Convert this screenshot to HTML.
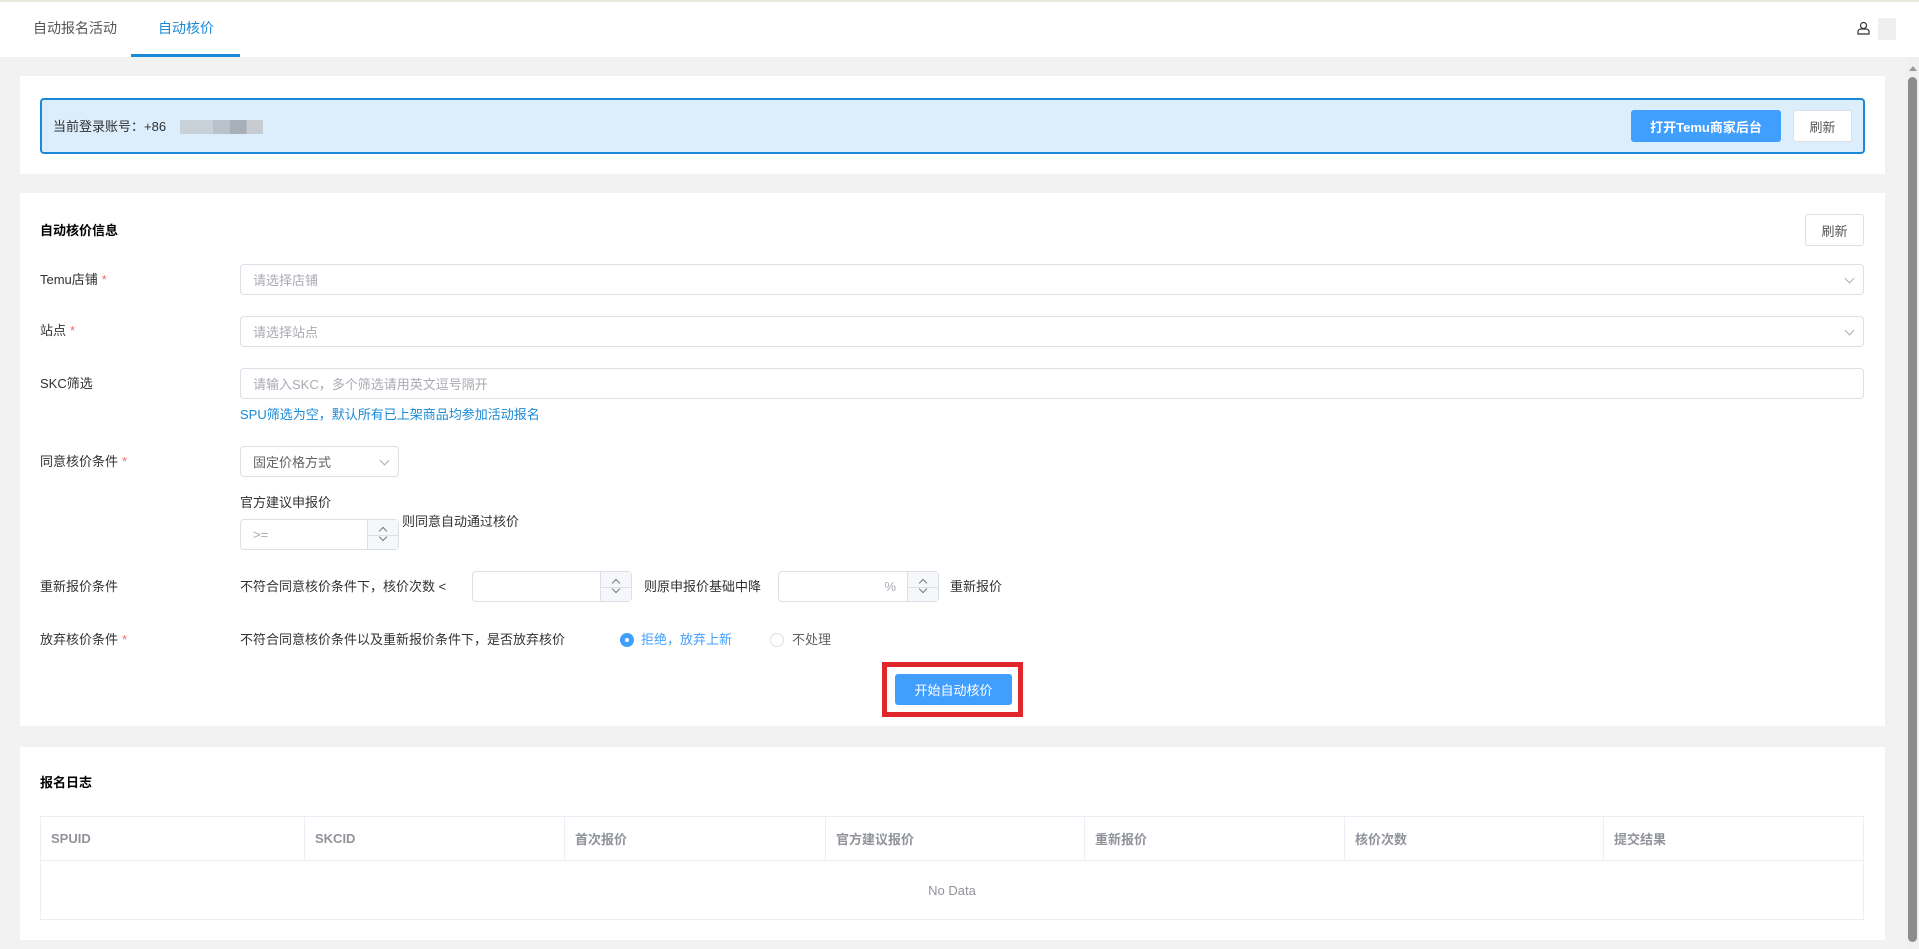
<!DOCTYPE html>
<html><head><meta charset="utf-8"><style>
*{box-sizing:border-box;margin:0;padding:0}
body{width:1919px;height:949px;overflow:hidden;background:#f2f2f2;font-family:"Liberation Sans","Noto Sans CJK SC",sans-serif;font-size:14px;color:#303133;position:relative}
.a{position:absolute}
.hdr{left:0;top:0;width:1919px;height:57px;background:#fff;border-top:2px solid #ebe8dc}
.card{background:#fff;left:20px;width:1865px}
.lbl{left:40px;font-size:13px;color:#303133;line-height:20px}
.lbl i{color:#f56c6c;font-style:normal;margin-left:4px}
.inp{border:1px solid #dcdfe6;border-radius:4px;background:#fff;color:#a8abb2;font-size:13px;padding-left:12px;display:flex;align-items:center}
.arrow{position:absolute;right:10px;top:50%;width:7px;height:7px;border-right:1px solid #a8abb2;border-bottom:1px solid #a8abb2;transform:translateY(-70%) rotate(45deg)}
.step{position:absolute;right:0;top:0;bottom:0;width:31px;border-left:1px solid #dcdfe6;background:#f5f7fa}
.step:after{content:"";position:absolute;left:0;right:0;top:50%;border-top:1px solid #dcdfe6}
.step b,.step s{position:absolute;left:12px;width:6px;height:6px;border-left:1px solid #777;border-top:1px solid #777}
.step b{top:8px;transform:rotate(45deg)}
.step s{bottom:9px;transform:rotate(225deg)}
.txt{font-size:13px;line-height:20px;color:#303133}
.btn{border-radius:3px;font-size:13px;display:flex;align-items:center;justify-content:center}
th,td{border:1px solid #ebeef5}
</style></head><body>
<div class="a hdr"></div>
<div class="a txt" style="left:33px;top:18px;font-size:14px;color:#555">自动报名活动</div>
<div class="a txt" style="left:158px;top:18px;font-size:14px;color:#1a8ad8">自动核价</div>
<div class="a" style="left:131px;top:54px;width:109px;height:3px;background:#1a8ad8"></div>
<svg class="a" style="left:1857px;top:21px" width="13" height="14" viewBox="0 0 13 14"><circle cx="6.5" cy="4.5" r="3" fill="none" stroke="#333" stroke-width="1.2"/><path d="M1 13v-2.5c0-1.5 1.5-2.5 3-2.5h5c1.5 0 3 1 3 2.5V13z" fill="none" stroke="#333" stroke-width="1.2"/></svg>
<div class="a" style="left:1878px;top:18px;width:18px;height:22px;background:#efefef"></div>
<div class="a" style="left:1906px;top:57px;width:13px;height:892px;background:#f0f0f0"></div>
<div class="a" style="left:1908px;top:66px;width:0;height:0;border-left:4px solid transparent;border-right:4px solid transparent;border-bottom:5px solid #999;margin-left:1px"></div>
<div class="a" style="left:1908px;top:77px;width:9px;height:865px;background:#8c8c8c;border-radius:5px"></div>

<div class="a card" style="top:76px;height:98px"></div>
<div class="a" style="left:40px;top:98px;width:1825px;height:56px;background:#dcedfb;border:2px solid #1a8ad8;border-radius:4px"></div>
<div class="a txt" style="left:53px;top:117px">当前登录账号：+86</div>
<div class="a" style="left:180px;top:120px;width:83px;height:14px;background:linear-gradient(90deg,#c8d0d8 0 40%,#b8c2cc 40% 60%,#a7afb8 60% 80%,#c6ccd2 80%)"></div>
<div class="a btn" style="left:1631px;top:110px;width:150px;height:32px;background:#409eff;color:#fff;font-weight:bold">打开Temu商家后台</div>
<div class="a btn" style="left:1793px;top:110px;width:59px;height:32px;background:#fff;border:1px solid #dcdfe6;color:#555">刷新</div>

<div class="a card" style="top:193px;height:533px"></div>
<div class="a txt" style="left:40px;top:221px;font-weight:bold;color:#000">自动核价信息</div>
<div class="a btn" style="left:1805px;top:214px;width:59px;height:32px;border:1px solid #dcdfe6;color:#555">刷新</div>

<div class="a lbl" style="top:270px">Temu店铺<i>*</i></div>
<div class="a inp" style="left:240px;top:264px;width:1624px;height:31px">请选择店铺<span class="arrow"></span></div>
<div class="a lbl" style="top:321px">站点<i>*</i></div>
<div class="a inp" style="left:240px;top:316px;width:1624px;height:31px">请选择站点<span class="arrow"></span></div>
<div class="a lbl" style="top:374px">SKC筛选</div>
<div class="a inp" style="left:240px;top:368px;width:1624px;height:31px">请输入SKC，多个筛选请用英文逗号隔开</div>
<div class="a txt" style="left:240px;top:405px;color:#1a8ad8">SPU筛选为空，默认所有已上架商品均参加活动报名</div>

<div class="a lbl" style="top:452px">同意核价条件<i>*</i></div>
<div class="a inp" style="left:240px;top:446px;width:159px;height:31px;color:#606266">固定价格方式<span class="arrow"></span></div>
<div class="a txt" style="left:240px;top:493px">官方建议申报价</div>
<div class="a inp" style="left:240px;top:519px;width:159px;height:31px">&gt;=<span class="step"><b></b><s></s></span></div>
<div class="a txt" style="left:402px;top:512px">则同意自动通过核价</div>

<div class="a lbl" style="top:577px">重新报价条件</div>
<div class="a txt" style="left:240px;top:577px">不符合同意核价条件下，核价次数 &lt;</div>
<div class="a inp" style="left:472px;top:571px;width:160px;height:31px"><span class="step"><b></b><s></s></span></div>
<div class="a txt" style="left:644px;top:577px">则原申报价基础中降</div>
<div class="a inp" style="left:778px;top:571px;width:161px;height:31px"><span style="position:absolute;right:42px">%</span><span class="step"><b></b><s></s></span></div>
<div class="a txt" style="left:950px;top:577px">重新报价</div>

<div class="a lbl" style="top:630px">放弃核价条件<i>*</i></div>
<div class="a txt" style="left:240px;top:630px">不符合同意核价条件以及重新报价条件下，是否放弃核价</div>
<div class="a" style="left:620px;top:633px;width:14px;height:14px;border-radius:50%;background:#409eff"><div style="margin:5px;width:4px;height:4px;border-radius:50%;background:#fff"></div></div>
<div class="a txt" style="left:641px;top:630px;color:#409eff">拒绝，放弃上新</div>
<div class="a" style="left:770px;top:633px;width:14px;height:14px;border-radius:50%;border:1px solid #dcdfe6"></div>
<div class="a txt" style="left:792px;top:630px;color:#606266">不处理</div>

<div class="a" style="left:882px;top:662px;width:141px;height:55px;border:5px solid #e0262b"></div>
<div class="a btn" style="left:895px;top:674px;width:117px;height:31px;background:#409eff;color:#fff">开始自动核价</div>

<div class="a card" style="top:747px;height:193px"></div>
<div class="a txt" style="left:40px;top:773px;font-weight:bold;color:#000">报名日志</div>
<table class="a" style="left:40px;top:816px;width:1824px;border-collapse:collapse;font-size:13px">
<tr style="height:44px;color:#909399;font-weight:bold;text-align:left">
<th style="width:264px;padding-left:10px">SPUID</th><th style="width:260px;padding-left:10px">SKCID</th><th style="width:261px;padding-left:10px">首次报价</th><th style="width:259px;padding-left:10px">官方建议报价</th><th style="width:260px;padding-left:10px">重新报价</th><th style="width:259px;padding-left:10px">核价次数</th><th style="padding-left:10px">提交结果</th></tr>
<tr style="height:59px"><td colspan="7" style="text-align:center;color:#909399">No Data</td></tr>
</table>
</body></html>
